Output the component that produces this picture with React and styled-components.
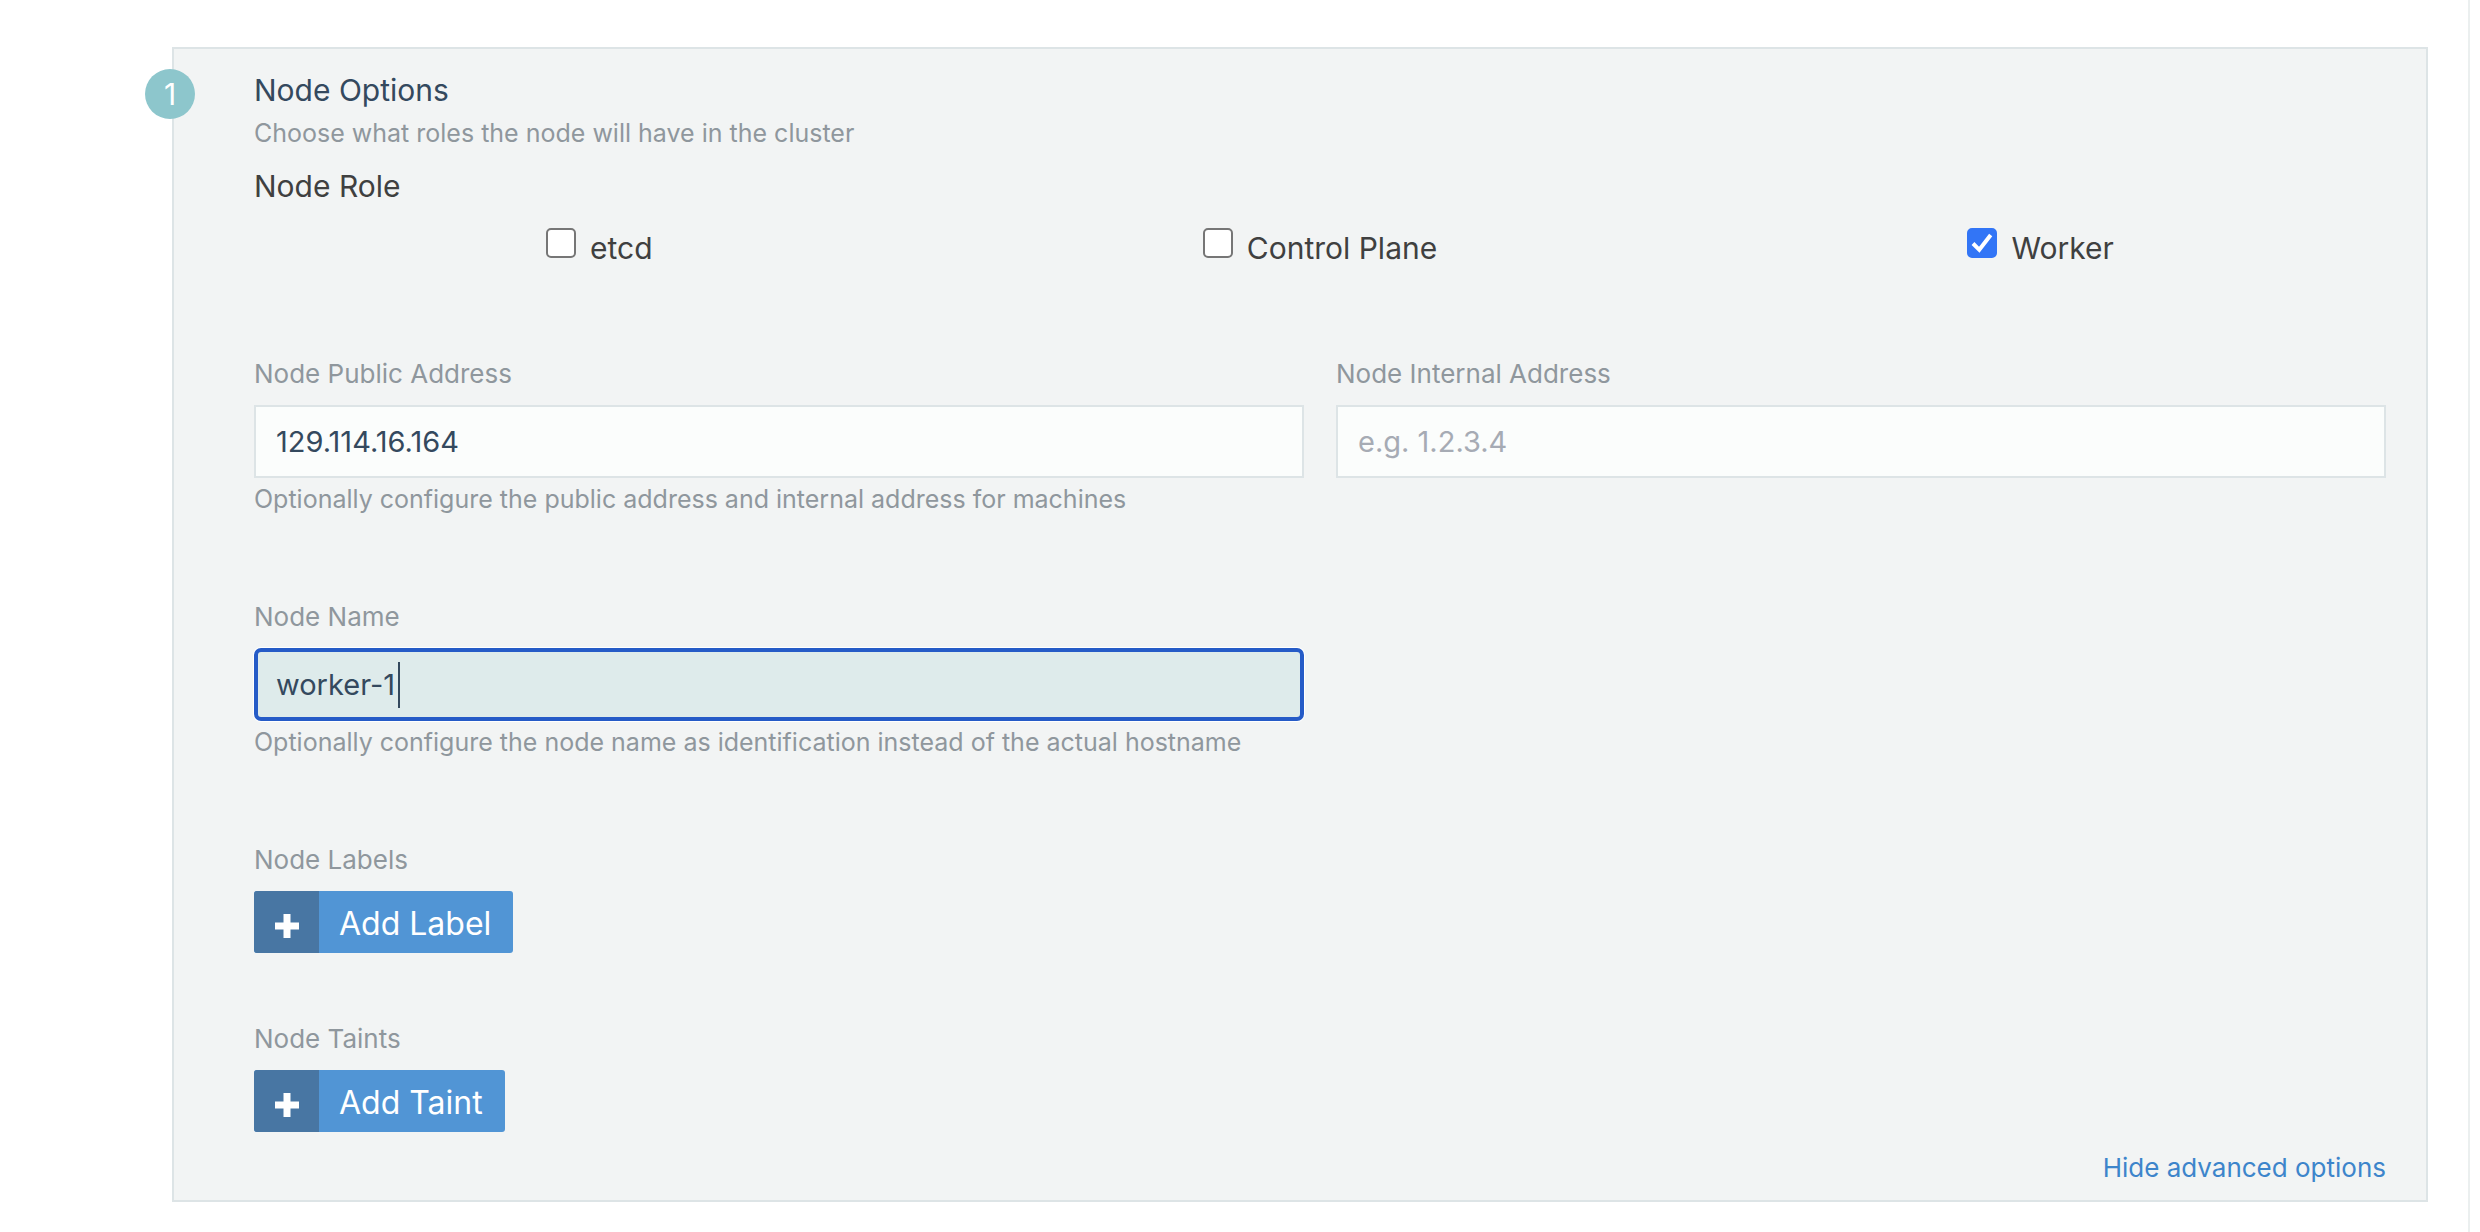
import React, { useState } from 'react';
import styled, { createGlobalStyle } from 'styled-components';

const GlobalStyle = createGlobalStyle`
  * { box-sizing: border-box; }
  body {
    margin: 0;
    background: #fff;
    color: #3f4040;
    font-family: Inter, "Open Sans", sans-serif;
    font-size: 30px;
    font-weight: 400;
  }
  input, button { font: inherit; }
`;

const Page = styled.main`
  min-height: 100vh;
  margin-right: 10px;
  padding: 47px 40px 30px 172px;
  border-right: 2px solid #ebefef;
`;

const Panel = styled.section`
  position: relative;
  padding: 19px 40px 14px 80px;
  background: #f2f4f4;
  border: 2px solid #dde4e6;
`;

const StepBadge = styled.span`
  position: absolute;
  top: 20px;
  left: -29px;
  display: flex;
  align-items: center;
  justify-content: center;
  width: 50px;
  height: 50px;
  border-radius: 50%;
  background: #8dc6cc;
  color: #fff;
`;

const Title = styled.h2`
  margin: 0;
  font-size: 30px;
  font-weight: inherit;
  line-height: 44px;
  color: #34495e;
`;

const HelpText = styled.p`
  margin: 0;
  font-size: 25px;
  line-height: 43px;
  color: #8f979d;
`;

const RoleGroup = styled.fieldset`
  margin: 9px 0 85px;
  padding: 0;
  border: 0;
`;

const RoleLegend = styled.legend`
  padding: 0;
  margin-bottom: 18px;
  line-height: 44px;
`;

const RoleGrid = styled.div`
  display: grid;
  grid-template-columns: repeat(3, 1fr);
  gap: 30px;
`;

const RoleLabel = styled.label`
  display: flex;
  justify-content: center;
  gap: 14px;
  line-height: 44px;
`;

const CheckWrap = styled.span`
  display: grid;
  width: 30px;
  height: 30px;
  margin-top: 2px;

  > * { grid-area: 1 / 1; }
`;

const CheckBox = styled.input`
  appearance: none;
  width: 30px;
  height: 30px;
  margin: 0;
  border: 2px solid #767676;
  border-radius: 5px;
  background: #fff;

  &:checked {
    border-color: #3275f6;
    background: #3275f6;
  }
`;

const CheckMark = styled.svg`
  width: 30px;
  height: 30px;
  pointer-events: none;
`;

const FieldGrid = styled.div`
  display: grid;
  grid-template-columns: repeat(2, 1fr);
  column-gap: 32px;
  margin-bottom: 77px;
`;

const FieldLabel = styled.label`
  display: block;
  margin-bottom: 12px;
  font-size: 26px;
  line-height: 38px;
  color: #8f979d;
`;

const InputBox = styled.div`
  position: relative;
`;

const TextInput = styled.input`
  display: block;
  width: 100%;
  height: 73px;
  padding: 0 20px;
  border: 2px solid #dde4e6;
  border-radius: 0;
  background: #fbfdfc;
  color: #34495e;
  font-size: 29px;
  outline: none;

  ${({ $active }) => $active && `
    padding: 0 18px;
    border: 4px solid #255bc7;
    border-radius: 7px;
    background: #deebeb;
    box-shadow: 0 0 0 1px #fff;
  `}

  &::placeholder {
    color: #a6abb4;
    opacity: 1;
  }
`;

const Caret = styled.span`
  position: absolute;
  top: 14px;
  left: 144px;
  width: 2px;
  height: 46px;
  background: #34495e;
`;

const ButtonField = styled.div`
  margin-bottom: ${({ $last }) => ($last ? 18 : 67)}px;
`;

const FieldHeading = styled(FieldLabel).attrs({ as: 'div' })``;

const AddButton = styled.button`
  display: flex;
  height: 62px;
  padding: 0;
  overflow: hidden;
  border: 0;
  border-radius: 3px;
  background: #5195d5;
  color: #fff;
  font-size: 32px;
  line-height: 62px;
`;

const ButtonIcon = styled.span`
  display: flex;
  align-items: center;
  justify-content: center;
  width: 65px;
  height: 62px;
  padding-top: 8px;
  background: #4876a3;
`;

const ButtonText = styled.span`
  padding: 2px 22px 0 20px;
`;

const Footer = styled.div`
  display: flex;
  justify-content: flex-end;
`;

const ToggleLink = styled.a`
  font-size: 26px;
  line-height: 36px;
  color: #3d85cb;
  text-decoration: none;
`;

const ROLES = [
  { id: 'etcd', label: 'etcd' },
  { id: 'controlPlane', label: 'Control Plane' },
  { id: 'worker', label: 'Worker' },
];

function RoleOption({ label, checked, onChange }) {
  return (
    <RoleLabel>
      <CheckWrap>
        <CheckBox type="checkbox" checked={checked} onChange={onChange} />
        {checked && (
          <CheckMark viewBox="0 0 30 30" aria-hidden="true">
            <path d="M6 15.5 12.3 21.8 23.7 7" fill="none" stroke="#fff" strokeWidth="4" />
          </CheckMark>
        )}
      </CheckWrap>
      <span>{label}</span>
    </RoleLabel>
  );
}

function AddField({ heading, action, last }) {
  return (
    <ButtonField $last={last}>
      <FieldHeading>{heading}</FieldHeading>
      <AddButton type="button">
        <ButtonIcon>
          <svg width="24" height="24" viewBox="0 0 24 24" aria-hidden="true">
            <path d="M8.5 0h7v8.5H24v7h-8.5V24h-7v-8.5H0v-7h8.5z" fill="#fff" />
          </svg>
        </ButtonIcon>
        <ButtonText>{action}</ButtonText>
      </AddButton>
    </ButtonField>
  );
}

export default function App() {
  const [roles, setRoles] = useState({ etcd: false, controlPlane: false, worker: true });
  const toggle = (id) => setRoles((r) => ({ ...r, [id]: !r[id] }));

  return (
    <>
      <GlobalStyle />
      <Page>
        <Panel>
          <StepBadge>1</StepBadge>
          <Title>Node Options</Title>
          <HelpText>Choose what roles the node will have in the cluster</HelpText>

          <RoleGroup>
            <RoleLegend>Node Role</RoleLegend>
            <RoleGrid>
              {ROLES.map(({ id, label }) => (
                <RoleOption key={id} label={label} checked={roles[id]} onChange={() => toggle(id)} />
              ))}
            </RoleGrid>
          </RoleGroup>

          <FieldGrid>
            <div>
              <FieldLabel htmlFor="public-address">Node Public Address</FieldLabel>
              <TextInput id="public-address" type="text" defaultValue="129.114.16.164" />
              <HelpText>Optionally configure the public address and internal address for machines</HelpText>
            </div>
            <div>
              <FieldLabel htmlFor="internal-address">Node Internal Address</FieldLabel>
              <TextInput id="internal-address" type="text" placeholder="e.g. 1.2.3.4" />
            </div>
          </FieldGrid>

          <FieldGrid>
            <div>
              <FieldLabel htmlFor="node-name">Node Name</FieldLabel>
              <InputBox>
                <TextInput id="node-name" type="text" defaultValue="worker-1" $active />
                <Caret />
              </InputBox>
              <HelpText>Optionally configure the node name as identification instead of the actual hostname</HelpText>
            </div>
          </FieldGrid>

          <AddField heading="Node Labels" action="Add Label" />
          <AddField heading="Node Taints" action="Add Taint" last />

          <Footer>
            <ToggleLink href="#advanced">Hide advanced options</ToggleLink>
          </Footer>
        </Panel>
      </Page>
    </>
  );
}
